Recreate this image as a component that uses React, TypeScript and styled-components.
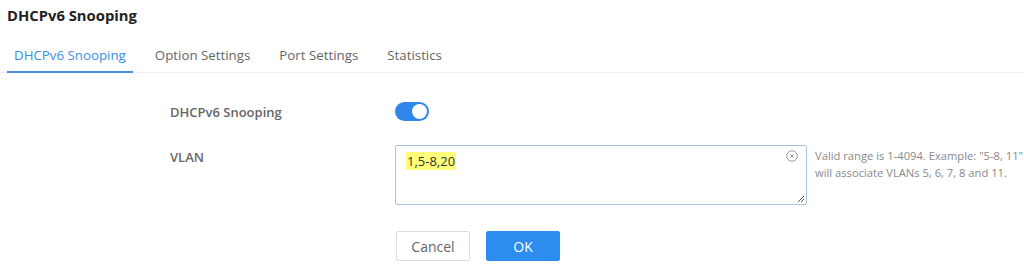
import React from "react";
import styled, { createGlobalStyle } from "styled-components";

const Global = createGlobalStyle`
  html, body { margin: 0; padding: 0; background: #fff; }
  body { font-family: "Open Sans", "Noto Sans", sans-serif; }
  * { box-sizing: border-box; }
`;

const Page = styled.div`
  width: 1024px;
  height: 267px;
  overflow: hidden;
  background: #fff;
`;

const Title = styled.h1`
  margin: 0;
  padding: 5px 0 0 7px;
  height: 33px;
  font-size: 14.8px;
  font-weight: 700;
  color: #222;
  line-height: 20px;
`;

const TabBar = styled.div`
  display: flex;
  padding-left: 7px;
  height: 40px;
  border-bottom: 1px solid #eceef0;
  gap: 15px;
`;

const Tab = styled.div<{ $active?: boolean }>`
  padding: 12px 7px 0;
  height: 40px;
  line-height: 20px;
  font-size: 13.3px;
  color: ${(p) => (p.$active ? "#3a8ee6" : "#666")};
  border-bottom: 2px solid ${(p) => (p.$active ? "#4a90e2" : "transparent")};
`;

const Form = styled.div`
  padding: 29px 0 0 170px;
  display: flex;
  flex-direction: column;
`;

const Row = styled.div<{ $mt?: number }>`
  display: flex;
  align-items: flex-start;
  margin-top: ${(p) => p.$mt ?? 0}px;
`;

const Label = styled.div<{ $pt?: number }>`
  width: 225px;
  flex-shrink: 0;
  font-size: 13px;
  font-weight: 600;
  color: #666;
  line-height: 20px;
  padding-top: ${(p) => p.$pt ?? 0}px;
`;

const Switch = styled.div`
  position: relative;
  width: 34px;
  height: 19px;
  border-radius: 10px;
  background: #2f87ea;
`;

const Knob = styled.span`
  position: absolute;
  right: 2px;
  top: 2px;
  width: 15px;
  height: 15px;
  border-radius: 50%;
  background: #fff;
`;

const TextArea = styled.div`
  position: relative;
  flex-shrink: 0;
  width: 412px;
  height: 60px;
  border: 1px solid #a9c4dc;
  border-radius: 2px;
  padding: 7px 10px;
  font-size: 13px;
  color: #333;
  line-height: 17px;
`;

const Mark = styled.span`
  background: #ffff7a;
  padding: 0 1px;
`;

const ClearIcon = styled.svg`
  position: absolute;
  right: 8px;
  top: 4px;
`;

const Grip = styled.svg`
  position: absolute;
  right: 2px;
  bottom: 2px;
`;

const Help = styled.div`
  margin-left: 8px;
  width: 212px;
  flex-shrink: 0;
  font-size: 11.2px;
  color: #888;
  line-height: 17px;
  padding-top: 2px;
`;

const Buttons = styled.div`
  display: flex;
  gap: 16px;
  margin-left: 226px;
`;

const Button = styled.button<{ $primary?: boolean }>`
  width: 74px;
  height: 30px;
  font-family: inherit;
  font-size: 14px;
  border-radius: 2px;
  border: 1px solid ${(p) => (p.$primary ? "#2d8cf0" : "#dcdee2")};
  background: ${(p) => (p.$primary ? "#2d8cf0" : "#fff")};
  color: ${(p) => (p.$primary ? "#fff" : "#666")};
  padding: 0;
`;

export default function App() {
  return (
    <Page>
      <Global />
      <Title>DHCPv6 Snooping</Title>
      <TabBar>
        <Tab $active>DHCPv6 Snooping</Tab>
        <Tab>Option Settings</Tab>
        <Tab>Port Settings</Tab>
        <Tab>Statistics</Tab>
      </TabBar>
      <Form>
        <Row>
          <Label>DHCPv6 Snooping</Label>
          <Switch>
            <Knob />
          </Switch>
        </Row>
        <Row $mt={23}>
          <Label $pt={2}>VLAN</Label>
          <TextArea>
            <Mark>1,5-8,20</Mark>
            <ClearIcon width="12" height="12" viewBox="0 0 12 12">
              <circle cx="6" cy="6" r="5.2" fill="none" stroke="#999" strokeWidth="1" />
              <path d="M4 4 L8 8 M8 4 L4 8" stroke="#999" strokeWidth="1" />
            </ClearIcon>
            <Grip width="7" height="7" viewBox="0 0 7 7">
              <path d="M1 7 L7 1 M4 7 L7 4" stroke="#555" strokeWidth="1" />
            </Grip>
          </TextArea>
          <Help>
            Valid range is 1-4094. Example: "5-8, 11" will associate VLANs 5, 6, 7, 8 and 11.
          </Help>
        </Row>
        <Row $mt={26}>
          <Buttons>
            <Button>Cancel</Button>
            <Button $primary>OK</Button>
          </Buttons>
        </Row>
      </Form>
    </Page>
  );
}
